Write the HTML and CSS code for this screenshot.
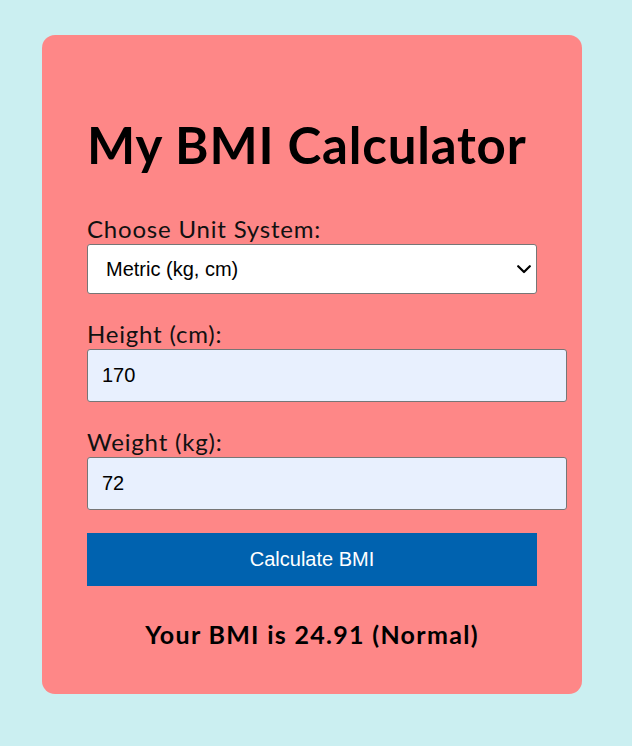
FILE: index.html
```html
<!DOCTYPE html>
<html>
<head>
<meta charset="utf-8">
<link rel="stylesheet" href="styles.css">
</head>
<body>
<div class="card">
  <h1 class="title">My BMI Calculator</h1>
  <label class="label label-first" for="unit">Choose Unit System:</label>
  <div class="select-wrap">
    <select id="unit" class="select">
      <option>Metric (kg, cm)</option>
    </select>
    <svg class="chevron" width="14" height="9" viewBox="0 0 14 9"><path d="M1.2 1.2 L7 7 L12.8 1.2" fill="none" stroke="#000" stroke-width="2.2" stroke-linecap="round" stroke-linejoin="round"/></svg>
  </div>
  <label class="label" for="height">Height (cm):</label>
  <input id="height" class="field" type="text" value="170">
  <label class="label" for="weight">Weight (kg):</label>
  <input id="weight" class="field" type="text" value="72">
  <button class="btn">Calculate BMI</button>
  <p class="result">Your BMI is 24.91 (Normal)</p>
</div>
</body>
</html>
```
FILE: styles.css
```css
html, body {
  margin: 0;
  padding: 0;
  background: #cbeff1;
}
body {
  padding-top: 35px;
  padding-left: 42px;
}
.card {
  box-sizing: border-box;
  width: 540px;
  height: 659px;
  background: #fe8787;
  border-radius: 13px;
  padding: 75px 45px 0 45px;
  display: flex;
  flex-direction: column;
  align-items: flex-start;
  font-family: "Comic Sans MS", Lato, sans-serif;
}
.card > * {
  flex-shrink: 0;
}
.title {
  margin: 0;
  font-size: 51px;
  line-height: 70px;
  font-weight: bold;
  color: #000;
  white-space: nowrap;
  letter-spacing: 0.8px;
}
.label {
  display: block;
  font-size: 24px;
  line-height: 26px;
  color: #111;
  margin-top: 27px;
  margin-bottom: 2px;
  letter-spacing: 0.8px;
}
.label-first {
  margin-top: 36px;
}
.select-wrap {
  position: relative;
  width: 450px;
  height: 50px;
}
.select {
  box-sizing: border-box;
  width: 450px;
  height: 50px;
  border: 1px solid #767676;
  border-radius: 3px;
  background: #fff;
  font-family: "Liberation Sans", Arial, sans-serif;
  font-size: 20px;
  padding: 0 18px;
  color: #000;
  appearance: none;
  -webkit-appearance: none;
  margin: 0;
}
.chevron {
  position: absolute;
  right: 6px;
  top: 21px;
  pointer-events: none;
}
.field {
  box-sizing: border-box;
  width: 480px;
  height: 53px;
  border: 1px solid #767676;
  border-radius: 3px;
  background: #e8f0fe;
  font-family: "Liberation Sans", Arial, sans-serif;
  font-size: 20px;
  padding: 0 14px;
  color: #000;
  margin: 0;
}
.btn {
  box-sizing: border-box;
  width: 450px;
  height: 53px;
  margin-top: 23px;
  border: none;
  background: #0062af;
  color: #fff;
  font-family: "Liberation Sans", Arial, sans-serif;
  font-size: 20px;
}
.result {
  align-self: stretch;
  text-align: center;
  margin: 35px 0 0 0;
  font-size: 25px;
  line-height: 26px;
  font-weight: bold;
  color: #000;
  letter-spacing: 1.3px;
}
```
